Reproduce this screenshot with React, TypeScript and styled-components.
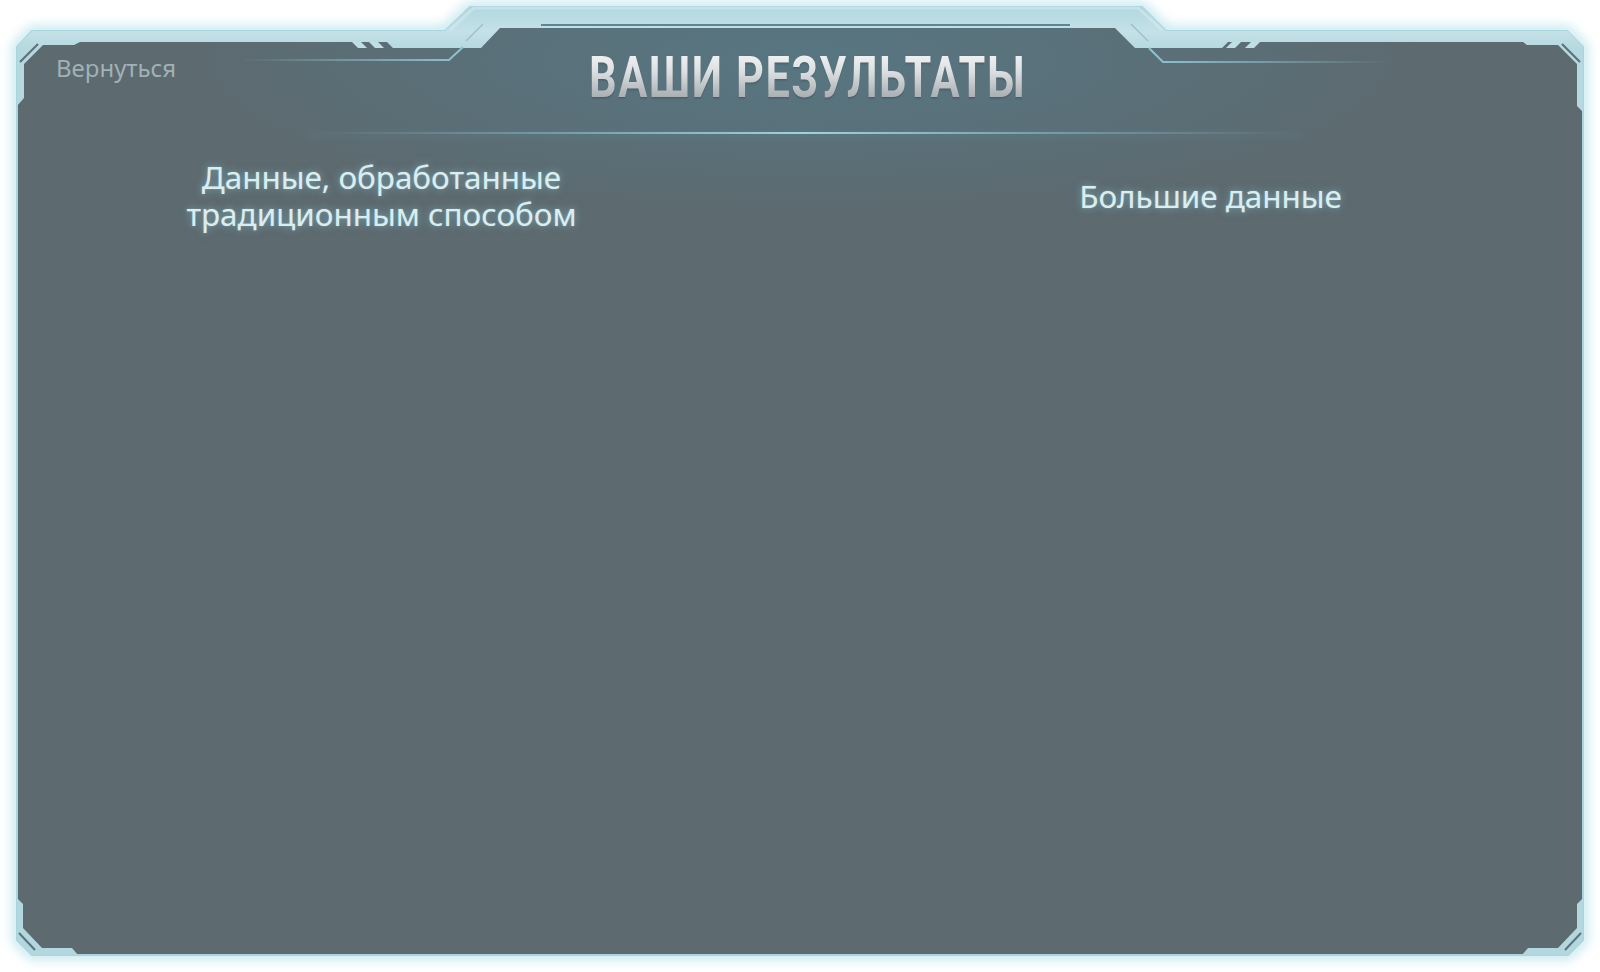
import React from "react";
import styled, { createGlobalStyle } from "styled-components";

const GlobalStyle = createGlobalStyle`
  html, body {
    margin: 0;
    padding: 0;
    background: #ffffff;
  }
  body {
    font-family: "Noto Sans", "Open Sans", sans-serif;
  }
`;

const Page = styled.div`
  position: relative;
  width: 1600px;
  height: 972px;
  overflow: hidden;
  padding: 7px 0 0 17px;
  box-sizing: border-box;
  background: #ffffff;
`;

const FrameArt = styled.svg`
  position: absolute;
  left: 0;
  top: 0;
  width: 1600px;
  height: 972px;
  pointer-events: none;
  z-index: 0;
`;

const Panel = styled.main`
  position: relative;
  z-index: 1;
  width: 1566px;
  display: flex;
  flex-direction: column;
`;

const Header = styled.header`
  display: grid;
  grid-template-columns: 1fr auto 1fr;
  align-items: start;
  padding-top: 42px;
`;

const BackLink = styled.a`
  justify-self: start;
  margin: 5px 0 0 39px;
  font-family: "Noto Sans", sans-serif;
  font-size: 24px;
  line-height: 28.8px;
  color: #a0b1b7;
  text-decoration: none;
  cursor: pointer;
`;

const TitleWrap = styled.div`
  display: flex;
  justify-content: center;
  padding-left: 16px;
`;

const Title = styled.h1`
  margin: 0;
  display: inline-block;
  font-family: "Roboto", "Liberation Sans", sans-serif;
  font-weight: 700;
  font-size: 57px;
  line-height: 57px;
  letter-spacing: 2px;
  white-space: nowrap;
  transform: scaleX(0.76);
  background: linear-gradient(180deg, #f6f6f6 0%, #dcdfe1 40%, #b3b8bb 75%, #9ca1a5 100%);
  -webkit-background-clip: text;
  background-clip: text;
  color: transparent;
  filter: drop-shadow(0 1px 1px rgba(20, 40, 50, 0.35));
`;

const Divider = styled.div`
  height: 2px;
  margin: 26px 280px 0 290px;
  background: linear-gradient(
    90deg,
    rgba(140, 200, 214, 0) 0%,
    rgba(140, 200, 214, 0.5) 25%,
    #9dd3de 50%,
    rgba(140, 200, 214, 0.5) 75%,
    rgba(140, 200, 214, 0) 100%
  );
  box-shadow: 0 2px 8px rgba(150, 215, 228, 0.2);
`;

const Columns = styled.section`
  display: flex;
  justify-content: center;
  align-items: center;
  gap: 329px;
  padding: 24px 8px 0 0;
`;

const Column = styled.div`
  width: 500px;
  display: flex;
  justify-content: center;
  text-align: center;
`;

const ColumnLabel = styled.h2`
  margin: 0;
  max-width: 410px;
  font-family: "Noto Sans", sans-serif;
  font-weight: 400;
  font-size: 31.4px;
  line-height: 37px;
  color: #dcedf0;
  text-shadow: 0 0 8px rgba(150, 215, 228, 0.55), 0 0 2px rgba(150, 215, 228, 0.4);
`;

const OUTLINE =
  "M32 31 L445 31 L470 7 L1142 7 L1166 31 L1567 31 L1583 47 L1583 940 L1568 955 L32 955 L17 940 L17 47 Z";

const Frame: React.FC = () => (
  <FrameArt viewBox="0 0 1600 972" aria-hidden="true">
    <defs>
      <filter id="glow" x="-10%" y="-10%" width="120%" height="120%">
        <feGaussianBlur stdDeviation="6" />
      </filter>
      <radialGradient
        id="tint"
        cx="0"
        cy="0"
        r="1"
        gradientUnits="userSpaceOnUse"
        gradientTransform="translate(800 60) scale(620 150)"
      >
        <stop offset="0" stopColor="#577681" />
        <stop offset="0.55" stopColor="#5a7079" />
        <stop offset="1" stopColor="#5d6a70" />
      </radialGradient>
      <linearGradient id="band" x1="0" y1="7" x2="0" y2="48" gradientUnits="userSpaceOnUse">
        <stop offset="0" stopColor="#b3d7df" />
        <stop offset="0.6" stopColor="#c4e1e7" />
        <stop offset="1" stopColor="#b6d9e0" />
      </linearGradient>
      <linearGradient id="lineL" x1="240" y1="0" x2="465" y2="0" gradientUnits="userSpaceOnUse">
        <stop offset="0" stopColor="#8fc4cf" stopOpacity="0" />
        <stop offset="1" stopColor="#8fc4cf" stopOpacity="1" />
      </linearGradient>
      <linearGradient id="lineR" x1="1148" y1="0" x2="1390" y2="0" gradientUnits="userSpaceOnUse">
        <stop offset="0" stopColor="#8fc4cf" stopOpacity="1" />
        <stop offset="1" stopColor="#8fc4cf" stopOpacity="0" />
      </linearGradient>
    </defs>

    {/* outer glow */}
    <path d={OUTLINE} fill="none" stroke="#a5dbe6" strokeWidth="9" opacity="0.75" filter="url(#glow)" />

    {/* panel body */}
    <path d={OUTLINE} fill="url(#tint)" stroke="#a9d5de" strokeWidth="2" />

    {/* top band with tab */}
    <path
      d="M32 31 L445 31 L470 7 L1142 7 L1166 31 L1567 31 L1578 42 L1268 42 L1228 42 L1222 48 L1135 48 L1115 28 L500 28 L481 48 L393 48 L387 42 L80 42 L80 31 Z"
      fill="url(#band)"
    />
    {/* tab rim */}
    <path d="M541 25 L1070 25" stroke="#5b8792" strokeWidth="2" />
    <path d="M466 41 L483 24 M1131 24 L1148 41" stroke="#94c1ca" strokeWidth="1.3" fill="none" />
    <path d="M450 30 L474 8 L1138 8 L1162 30" stroke="#d6edf1" strokeWidth="3" fill="none" opacity="0.5" />

    {/* stripes */}
    <path d="M352 42 L361 42 L367 48 L358 48 Z" fill="#c0dfe5" />
    <path d="M369 42 L378 42 L384 48 L375 48 Z" fill="#c0dfe5" />
    <path d="M1232 42 L1241 42 L1235 48 L1226 48 Z" fill="#c0dfe5" />
    <path d="M1251 42 L1260 42 L1254 48 L1245 48 Z" fill="#c0dfe5" />

    {/* thin lines under band */}
    <path d="M240 60 L449 60 L463 47" stroke="url(#lineL)" strokeWidth="2" fill="none" />
    <path d="M1149 48 L1163 62 L1390 62" stroke="url(#lineR)" strokeWidth="2" fill="none" />

    {/* top-left corner bracket */}
    <path d="M17 47 L32 31 L80 31 L80 42 L74 45 L43 45 L24 64 L24 98 L17 106 Z" fill="url(#band)" />
    <path d="M20 62 L38 44" stroke="#5c737a" strokeWidth="2.2" />

    {/* top-right corner bracket */}
    <path d="M1520 31 L1567 31 L1583 47 L1583 112 L1577 106 L1577 64 L1558 45 L1527 45 L1523 42 L1520 42 Z" fill="url(#band)" />
    <path d="M1562 44 L1580 62" stroke="#5c737a" strokeWidth="2.2" />

    {/* bottom-left corner bracket */}
    <path d="M17 898 L23 904 L23 928 L42 948 L72 948 L78 955 L32 955 L17 940 Z" fill="#b3d7df" />
    <path d="M19 933 L35 950" stroke="#5c737a" strokeWidth="2" />

    {/* bottom-right corner bracket */}
    <path d="M1583 898 L1577 904 L1577 928 L1558 948 L1528 948 L1522 955 L1568 955 L1583 940 Z" fill="#b3d7df" />
    <path d="M1581 933 L1565 950" stroke="#5c737a" strokeWidth="2" />
  </FrameArt>
);

export default function App() {
  return (
    <>
      <GlobalStyle />
      <Page>
        <Frame />
        <Panel>
          <Header>
            <BackLink>Вернуться</BackLink>
            <TitleWrap>
              <Title>ВАШИ РЕЗУЛЬТАТЫ</Title>
            </TitleWrap>
            <div />
          </Header>
          <Divider />
          <Columns>
            <Column>
              <ColumnLabel>Данные, обработанные традиционным способом</ColumnLabel>
            </Column>
            <Column>
              <ColumnLabel>Большие данные</ColumnLabel>
            </Column>
          </Columns>
        </Panel>
      </Page>
    </>
  );
}
